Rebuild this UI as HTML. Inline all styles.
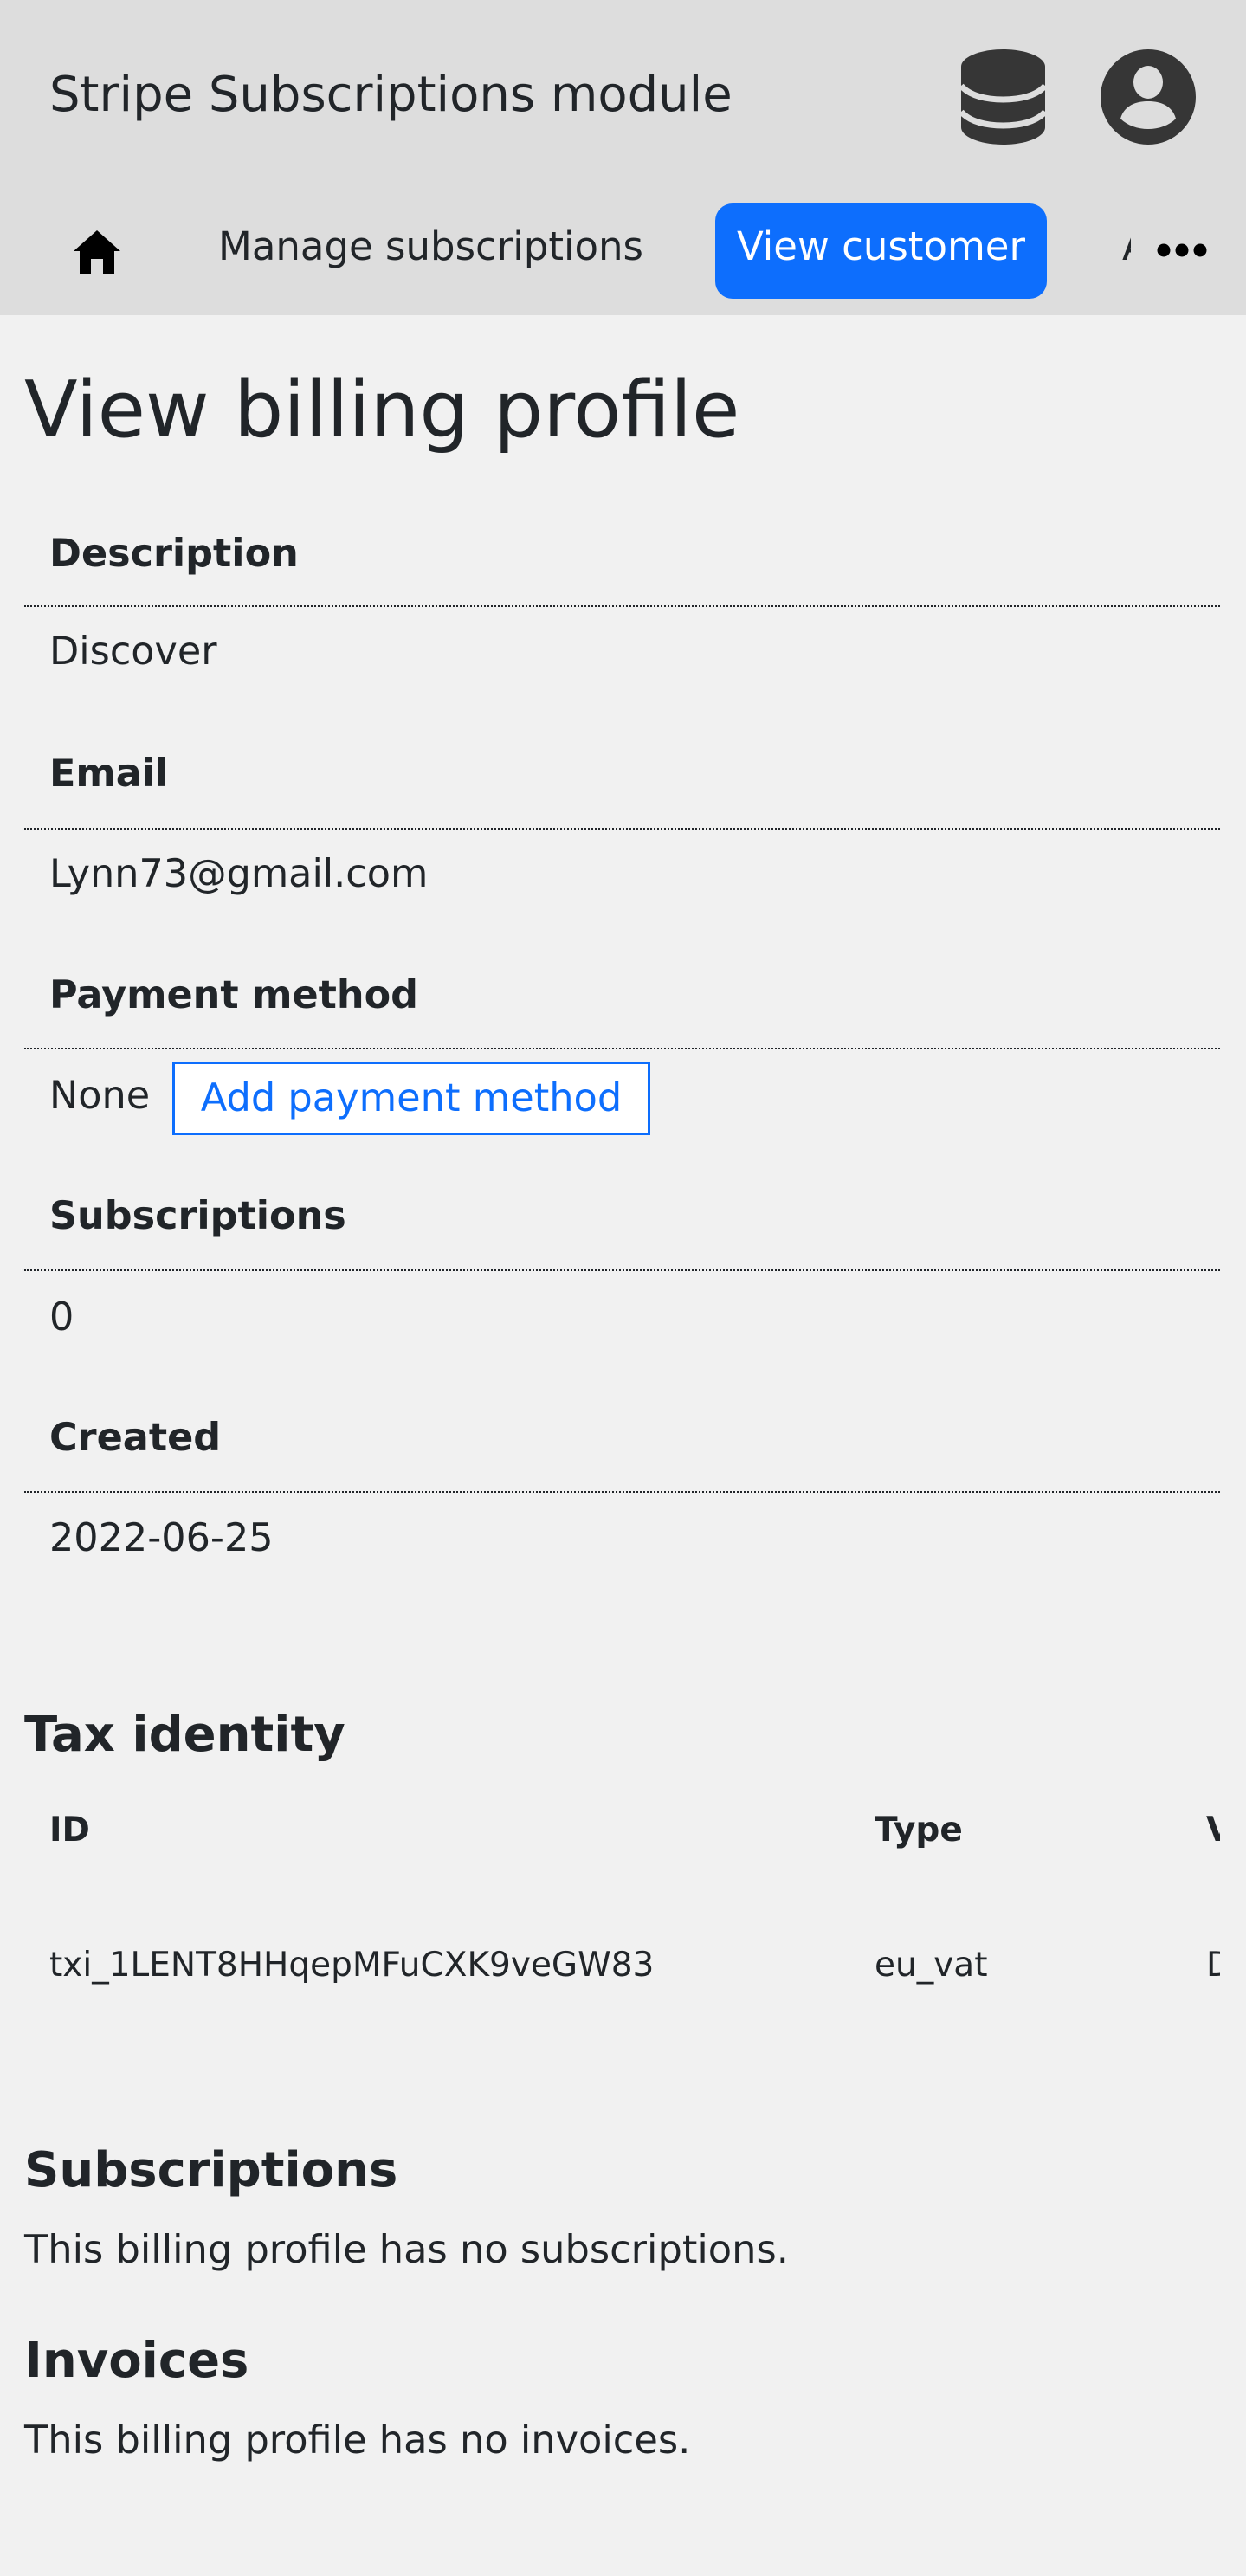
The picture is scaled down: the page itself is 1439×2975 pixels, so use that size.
<!DOCTYPE html>
<html><head><meta charset="utf-8"><style>
*{margin:0;padding:0;box-sizing:border-box}
html,body{width:1439px;height:2975px;overflow:hidden;background:#f1f1f1;font-family:"DejaVu Sans","Liberation Sans",sans-serif;color:#212529}
.a{position:absolute;white-space:nowrap}
.hdr{position:absolute;left:0;top:0;width:1439px;height:364px;background:#dddddd}
.lbl{font-weight:bold;font-size:44.5px;line-height:60px;left:57px}
.val{font-size:44.5px;line-height:60px;left:57px}
.line{position:absolute;left:28px;width:1381px;border-top:2px dotted #212529;height:0}
.h2{font-weight:bold;font-size:56px;line-height:70px;left:28px}
.p{font-size:44.7px;line-height:60px;left:28px}
.th{font-weight:bold;font-size:39px;line-height:50px}
.td{font-size:39px;line-height:50px}
.clip{position:absolute;left:0;top:2060px;width:1409px;height:280px;overflow:hidden}
</style></head><body>
<div class="hdr"></div>
<div class="a" style="left:57px;top:80px;font-size:56px;line-height:60px">Stripe Subscriptions module</div>
<svg class="a" style="left:1110px;top:57px" width="97" height="110" viewBox="0 0 97 110">
<path fill="#363636" d="M0 20C0 9 22 0 48.5 0S97 9 97 20V90C97 101 75 110 48.5 110S0 101 0 90Z"/>
<path d="M0 42C10 54 30 58 48.5 58S87 54 97 42M0 72C10 84 30 88 48.5 88S87 84 97 72" stroke="#dddddd" stroke-width="7" fill="none"/>
</svg>
<svg class="a" style="left:1270px;top:57px" width="112" height="110" viewBox="0 0 112 110">
<circle cx="56" cy="55" r="55" fill="#363636"/>
<ellipse cx="56" cy="38" rx="17" ry="19" fill="#dddddd"/>
<path d="M24 80C28 66 40 60 56 60S84 66 88 80C80 88 68 92 56 92S32 88 24 80Z" fill="#dddddd"/>
</svg>
<svg class="a" style="left:85px;top:266px" width="54" height="50" viewBox="0 0 54 50">
<path d="M27 0L0 24H7V50H20V33H34V50H47V24H54Z" fill="#000"/>
</svg>
<div class="a" style="left:252px;top:260px;font-size:45px;line-height:50px">Manage subscriptions</div>
<div class="a" style="left:826px;top:235px;width:383px;height:110px;background:#0d6efd;border-radius:20px;color:#fff;font-size:45px;line-height:100px;text-align:center">View customer</div>
<div class="a" style="left:1296px;top:260px;width:10px;overflow:hidden;font-size:45px;line-height:50px">A</div>
<svg class="a" style="left:1336px;top:280px" width="58" height="18"><circle cx="8" cy="9" r="7.5"/><circle cx="29" cy="9" r="7.5"/><circle cx="50" cy="9" r="7.5"/></svg>

<div class="a" style="left:28px;top:420px;font-size:90px;line-height:108px">View billing profile</div>

<div class="a lbl" style="top:610px">Description</div><div class="line" style="top:699px"></div><div class="a val" style="top:723px">Discover</div>
<div class="a lbl" style="top:864px">Email</div><div class="line" style="top:956px"></div><div class="a val" style="top:980px">Lynn73@gmail.com</div>
<div class="a lbl" style="top:1120px">Payment method</div><div class="line" style="top:1210px"></div><div class="a val" style="top:1236px">None</div>
<div class="a" style="left:199px;top:1226px;width:552px;height:85px;border:3px solid #0d6efd;background:#fff;color:#0d6efd;font-size:44.7px;line-height:78px;text-align:center">Add payment method</div>
<div class="a lbl" style="top:1375px">Subscriptions</div><div class="line" style="top:1466px"></div><div class="a val" style="top:1492px">0</div>
<div class="a lbl" style="top:1631px">Created</div><div class="line" style="top:1722px"></div><div class="a val" style="top:1747px">2022-06-25</div>

<div class="a h2" style="top:1969px">Tax identity</div>
<div class="clip">
<div class="a th" style="left:57px;top:29px">ID</div>
<div class="a th" style="left:1010px;top:29px">Type</div>
<div class="a th" style="left:1393px;top:29px">Value</div>
<div class="a td" style="left:57px;top:185px">txi_1LENT8HHqepMFuCXK9veGW83</div>
<div class="a td" style="left:1010px;top:185px">eu_vat</div>
<div class="a td" style="left:1393px;top:185px">DE123</div>
</div>

<div class="a h2" style="top:2472px">Subscriptions</div>
<div class="a p" style="top:2568px">This billing profile has no subscriptions.</div>
<div class="a h2" style="top:2692px">Invoices</div>
<div class="a p" style="top:2788px">This billing profile has no invoices.</div>
</body></html>
